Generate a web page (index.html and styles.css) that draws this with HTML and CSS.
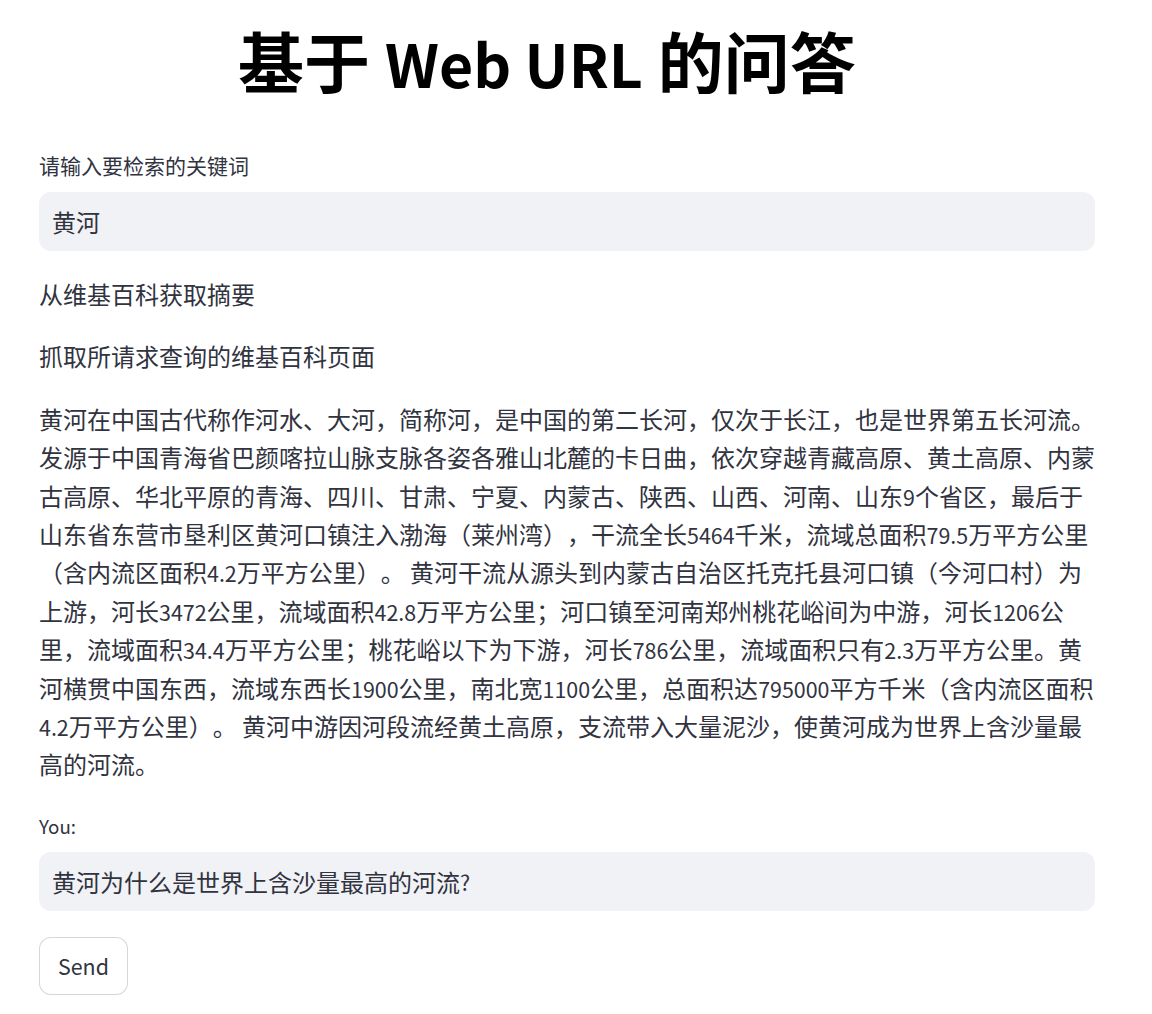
FILE: index.html
```html
<!DOCTYPE html>
<html lang="zh-CN">
<head>
<meta charset="utf-8">
<title>基于 Web URL 的问答</title>
<link rel="stylesheet" href="styles.css">
</head>
<body>
<main class="main">
  <h1 class="title">基于 <span class="latin">Web URL</span> 的问答</h1>
  <div class="field">
    <label class="label">请输入要检索的关键词</label>
    <div class="input">黄河</div>
  </div>
  <p class="text">从维基百科获取摘要</p>
  <p class="text">抓取所请求查询的维基百科页面</p>
  <p class="text">黄河在中国古代称作河水、大河，简称河，是中国的第二长河，仅次于长江，也是世界第五长河流。发源于中国青海省巴颜喀拉山脉支脉各姿各雅山北麓的卡日曲，依次穿越青藏高原、黄土高原、内蒙古高原、华北平原的青海、四川、甘肃、宁夏、内蒙古、陕西、山西、河南、山东<span class="latin">9</span>个省区，最后于山东省东营市垦利区黄河口镇注入渤海（莱州湾），干流全长<span class="latin">5464</span>千米，流域总面积<span class="latin">79.5</span>万平方公里（含内流区面积<span class="latin">4.2</span>万平方公里）。 黄河干流从源头到内蒙古自治区托克托县河口镇（今河口村）为上游，河长<span class="latin">3472</span>公里，流域面积<span class="latin">42.8</span>万平方公里；河口镇至河南郑州桃花峪间为中游，河长<span class="latin">1206</span>公里，流域面积<span class="latin">34.4</span>万平方公里；桃花峪以下为下游，河长<span class="latin">786</span>公里，流域面积只有<span class="latin">2.3</span>万平方公里。黄河横贯中国东西，流域东西长<span class="latin">1900</span>公里，南北宽<span class="latin">1100</span>公里，总面积达<span class="latin">795000</span>平方千米（含内流区面积<span class="latin">4.2</span>万平方公里）。 黄河中游因河段流经黄土高原，支流带入大量泥沙，使黄河成为世界上含沙量最高的河流。</p>
  <div class="field">
    <label class="label"><span class="latin">You:</span></label>
    <div class="input">黄河为什么是世界上含沙量最高的河流<span class="latin">?</span></div>
  </div>
  <div class="actions">
    <button class="btn" type="button">Send</button>
  </div>
</main>
</body>
</html>
```

FILE: styles.css
```css
html, body {
  margin: 0;
  padding: 0;
  background: #ffffff;
}
body {
  font-family: "Noto Sans CJK SC", "Noto Sans", sans-serif;
  color: rgb(49, 51, 63);
  text-spacing-trim: space-all;
}
.main {
  width: 1056px;
  padding: 20px 0 20px 39px;
  display: flex;
  flex-direction: column;
  gap: 24px;
}
.title {
  margin: 0;
  font-size: 66px;
  font-weight: 700;
  line-height: 79px;
  text-align: center;
  padding-right: 40px;
  color: #000;
  margin-bottom: 25px;
}
.latin {
  font-size: 0.893em;
  line-height: 1;
}
.field {
  display: flex;
  flex-direction: column;
}
.label {
  font-size: 21px;
  line-height: 34px;
  margin-bottom: 10px;
}
.input {
  height: 59px;
  box-sizing: border-box;
  background: #f0f2f6;
  border-radius: 12px;
  padding: 0 13px;
  display: flex;
  align-items: center;
  font-size: 24px;
}
.text {
  margin: 0;
  font-size: 24px;
  line-height: 38.4px;
}
.actions {
  display: flex;
  margin-top: 2px;
}
.btn {
  font-family: inherit;
  font-size: 21.4px;
  color: rgb(49, 51, 63);
  background: #fff;
  border: 1px solid rgba(49, 51, 63, 0.2);
  border-radius: 12px;
  padding: 0 18px;
  height: 58px;
  line-height: 38px;
}
```
